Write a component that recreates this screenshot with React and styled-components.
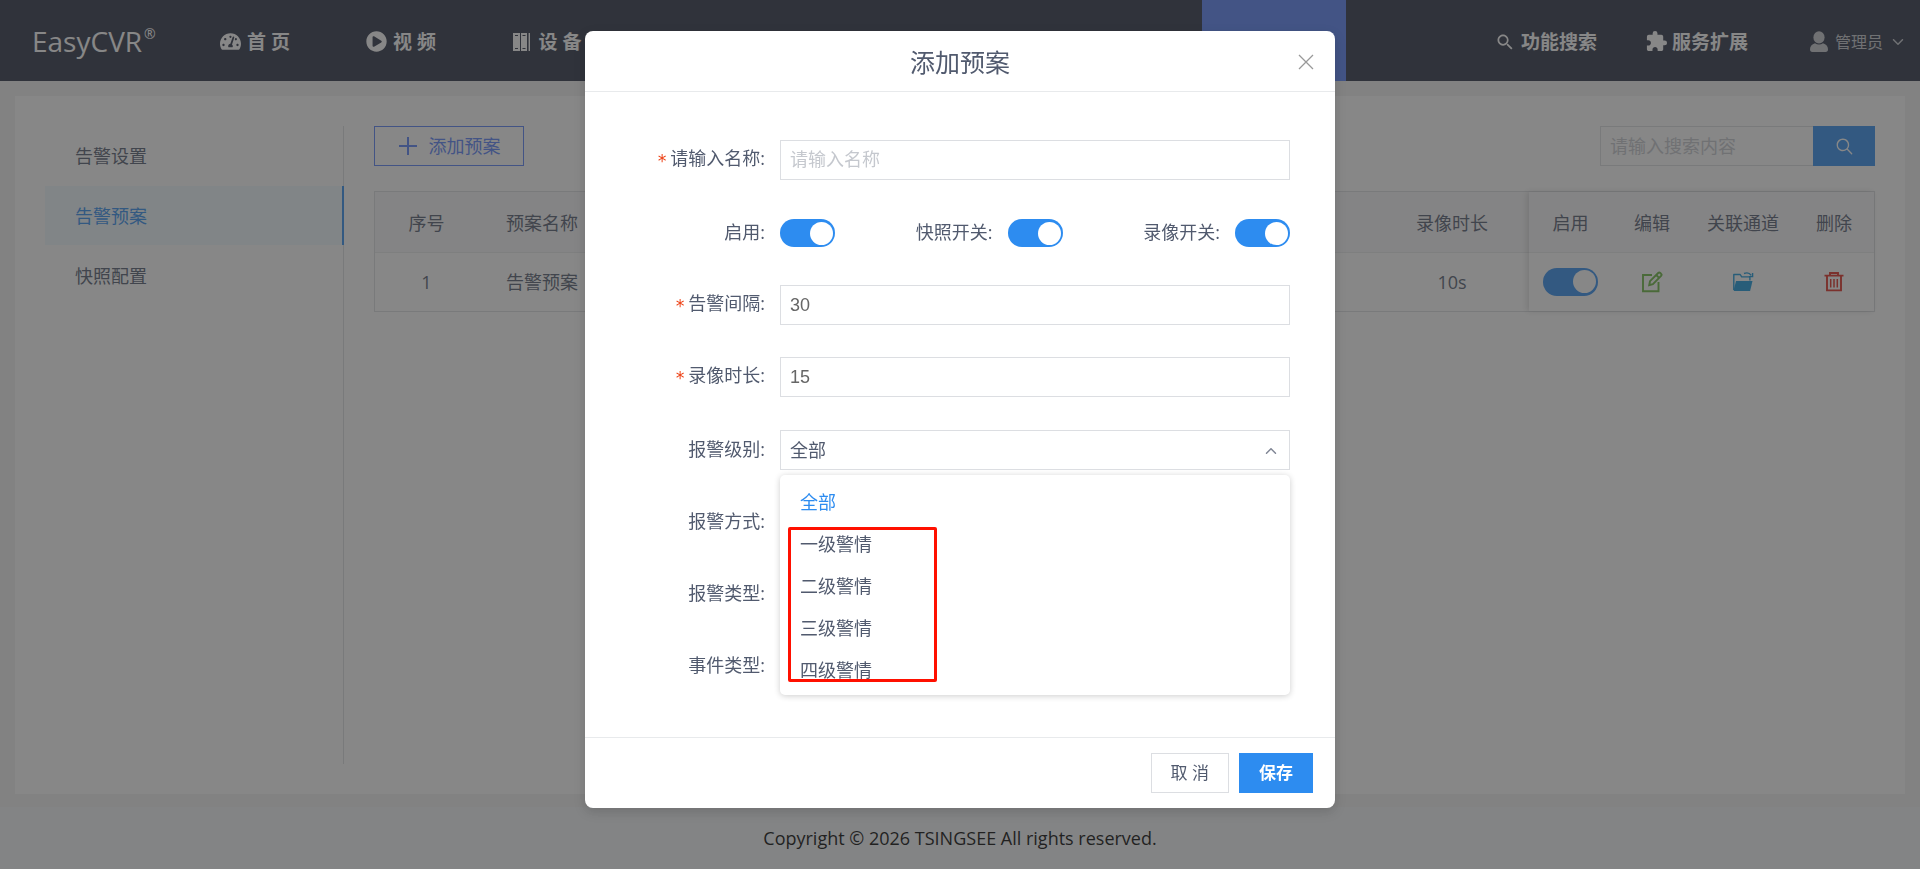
import React, { useState } from "react";
import styled, { createGlobalStyle } from "styled-components";
import { FaTachometerAlt, FaPlayCircle } from "react-icons/fa";
import { MdExtension } from "react-icons/md";
import {
   IoIosArrowDown,
   IoIosArrowUp,
   IoIosSearch,
   IoMdSearch,
} from "react-icons/io";

const GlobalStyle = createGlobalStyle`
   * {
      box-sizing: border-box;
   }
   body {
      margin: 0;
      font-family: "Open Sans", "Noto Sans CJK SC", sans-serif;
      font-size: 18px;
      line-height: 24px;
      color: #515a6e;
      background: #f2f2f2;
   }
   button, input, select {
      margin: 0;
      font: inherit;
      color: inherit;
      border-radius: 0;
      outline: none;
   }
   svg {
      display: block;
      flex: none;
   }
`;
const Page = styled.div`
   display: flex;
   flex-direction: column;
   min-height: 100vh;
`;
const Header = styled.header`
   display: flex;
   height: 81px;
   color: #fff;
   background: #272e42;
`;
const Logo = styled.a`
   display: flex;
   align-items: center;
   width: 182px;
   padding-left: 32px;
   color: inherit;
   font-size: 28px;
   text-decoration: none;
   sup {
      align-self: flex-start;
      padding: 22px 0 0 2px;
      font-size: 14px;
   }
`;
const Nav = styled.nav`
   display: flex;
   flex: 1;
`;
const NavLink = styled.a`
   display: flex;
   align-items: center;
   justify-content: center;
   gap: ${(props) => props.$gap || 6}px;
   width: 146px;
   padding-top: 2px;
   color: inherit;
   font-size: 19px;
   font-weight: bold;
   text-decoration: none;
`;
const ActiveLink = styled(NavLink)`
   width: 144px;
   margin-left: auto;
   background: #5580fa;
`;
const Tools = styled.div`
   display: flex;
   align-items: center;
   justify-content: flex-end;
   gap: 48px;
   width: 574px;
   padding-right: 14px;
`;
const ToolLink = styled(NavLink)`
   width: auto;
`;
const UserButton = styled.button`
   display: flex;
   align-items: center;
   gap: 7px;
   margin-left: 14px;
   padding: 2px 0 0;
   border: none;
   color: #c5c8ce;
   font-size: 16px;
   background: none;
`;
const Card = styled.main`
   display: flex;
   flex: 1;
   gap: 30px;
   margin: 15px 15px 13px;
   padding: 30px;
   background: #fff;
`;
const SideMenu = styled.nav`
   width: 299px;
   border-right: 1px solid #dcdee2;
`;
const SideLink = styled.a`
   display: flex;
   align-items: center;
   height: 59px;
   margin-right: ${(props) => (props.$active ? "-1px" : "0")};
   margin-bottom: 1px;
   padding-left: 30px;
   border-right: 2px solid ${(props) => (props.$active ? "#2d8cf0" : "transparent")};
   color: ${(props) => (props.$active ? "#2d8cf0" : "inherit")};
   background: ${(props) => (props.$active ? "#f0faff" : "none")};
   text-decoration: none;
`;
const Content = styled.section`
   flex: 1;
   min-width: 0;
`;
const Toolbar = styled.div`
   display: flex;
   justify-content: space-between;
   margin-bottom: 25px;
`;
const AddButton = styled.button`
   display: flex;
   align-items: center;
   justify-content: center;
   gap: 11px;
   width: 150px;
   height: 40px;
   border: 1px solid #5580fa;
   color: #5580fa;
   background: #fff;
`;
const SearchBox = styled.form`
   display: flex;
   width: 275px;
   height: 40px;
   input {
      flex: 1;
      min-width: 0;
      padding: 0 9px;
      border: 1px solid #dcdee2;
      border-right: none;
   }
   input::placeholder {
      color: #c5c8ce;
   }
   button {
      display: flex;
      align-items: center;
      justify-content: center;
      width: 62px;
      padding: 0;
      border: none;
      color: #fff;
      background: #2d8cf0;
   }
`;
const TableWrap = styled.div`
   display: flex;
   border: 1px solid #dcdee2;
`;
const Table = styled.table`
   flex: 1;
   table-layout: fixed;
   border-collapse: collapse;
   th, td {
      height: 60px;
      padding: 0;
      font-weight: normal;
      text-align: center;
   }
   th {
      padding-top: 2px;
      border-bottom: 1px solid #e8eaec;
      background: #f8f8f9;
   }
   td {
      height: 59px;
   }
   td > * {
      margin: 0 auto;
   }
`;
const FixedTable = styled(Table)`
   flex: none;
   width: 345px;
   box-shadow: -2px 0 6px rgba(0, 0, 0, 0.15);
`;
const IconButton = styled.button`
   display: block;
   padding: 0;
   border: none;
   background: none;
`;
const Switch = styled.input.attrs({ type: "checkbox", role: "switch" })`
   display: flex;
   align-items: center;
   appearance: none;
   flex: none;
   width: 55px;
   height: 28px;
   padding: 0 2px;
   border-radius: 14px;
   background: #ccc;
   &::before {
      content: "";
      width: 23px;
      height: 23px;
      border-radius: 50%;
      background: #fff;
   }
   &:checked {
      justify-content: flex-end;
      background: #2d8cf0;
   }
`;
const Footer = styled.footer`
   height: 62px;
   color: #000;
   line-height: 62px;
   text-align: center;
   background: #f5f7f9;
`;
const Mask = styled.div`
   position: fixed;
   inset: 0;
   display: flex;
   align-items: flex-start;
   justify-content: center;
   padding-top: 31px;
   background: rgba(55, 55, 55, 0.6);
`;
const Modal = styled.div`
   width: 750px;
   max-width: 100%;
   border-radius: 8px;
   background: #fff;
   box-shadow: 0 4px 12px rgba(0, 0, 0, 0.15);
`;
const ModalHeader = styled.div`
   display: grid;
   grid-template-columns: 1fr auto 1fr;
   align-items: center;
   height: 61px;
   padding: 2px 21px 0;
   border-bottom: 1px solid #e8eaec;
   h2 {
      grid-column: 2;
      margin: 0;
      font-size: 25px;
      font-weight: normal;
   }
   button {
      justify-self: end;
      padding: 0;
      border: none;
      background: none;
   }
`;
const ModalBody = styled.form`
   padding: 48px 45px 19px 20px;
`;
const ModalFooter = styled.div`
   display: flex;
   justify-content: flex-end;
   gap: 10px;
   padding: 15px 22px;
   border-top: 1px solid #e8eaec;
`;
const Button = styled.button`
   height: 40px;
   padding: 0 19px;
   border: 1px solid ${(props) => (props.$primary ? "#2d8cf0" : "#dcdee2")};
   color: ${(props) => (props.$primary ? "#fff" : "#515a6e")};
   font-size: 17px;
   font-weight: ${(props) => (props.$primary ? "bold" : "normal")};
   background: ${(props) => (props.$primary ? "#2d8cf0" : "#fff")};
`;
const FormItem = styled.div`
   display: flex;
   align-items: center;
   gap: 15px;
   height: 40px;
   margin-bottom: ${(props) => (props.$compact ? 32 : 33)}px;
`;
const Label = styled.label`
   width: 160px;
   padding-bottom: 2px;
   text-align: right;
   &::before {
      content: ${(props) => (props.$required ? '"*"' : "none")};
      margin-right: 3px;
      color: #ed4014;
      font-family: "DejaVu Sans Mono", monospace;
      font-size: 17px;
      vertical-align: -2px;
   }
`;
const TextInput = styled.input`
   flex: 1;
   min-width: 0;
   height: 40px;
   padding: 0 9px;
   border: 1px solid #dcdee2;
   color: #666;
   font-family: "Liberation Sans", "Noto Sans CJK SC", sans-serif;
   &::placeholder {
      color: #c5c8ce;
   }
`;
const SwitchRow = styled.div`
   display: flex;
   flex: 1;
   align-items: center;
   justify-content: space-between;
`;
const SwitchField = styled.label`
   display: flex;
   align-items: center;
   gap: 15px;
   span {
      padding-bottom: 2px;
   }
`;
const SelectBox = styled.div`
   position: relative;
   flex: 1;
   select {
      display: block;
      appearance: none;
      width: 100%;
      height: 40px;
      padding: 0 9px;
      border: 1px solid #dcdee2;
      background: #fff;
   }
   > svg {
      position: absolute;
      top: 13px;
      right: 11px;
      color: #808695;
   }
`;
const Dropdown = styled.ul`
   position: absolute;
   z-index: 2;
   top: 45px;
   left: 0;
   right: 0;
   margin: 0;
   padding: 6px 0 4px;
   border-radius: 5px;
   list-style: none;
   background: #fff;
   box-shadow: 0 1px 6px rgba(0, 0, 0, 0.2);
`;
const DropdownItem = styled.li`
   padding: 9px 20px;
   color: ${(props) => (props.$selected ? "#2d8cf0" : "inherit")};
`;
const Highlight = styled.div`
   position: absolute;
   z-index: 3;
   top: 97px;
   left: 8px;
   width: 149px;
   height: 155px;
   border: 3px solid #ff1000;
   border-radius: 2px;
   pointer-events: none;
`;

const DeviceIcon = () => (
   <svg width="18" height="18" viewBox="0 0 18 18" fill="currentColor">
      <path
         fillRule="evenodd"
         d="M0 0h7v18H0zM2 2v1h3V2zM2 15v1h3v-1zM8 0h6v18H8zM9.5 2v1h3V2zM9.5 15v1h3v-1zM15.6 0H17v18h-1.4z"
      />
   </svg>
);
const UserIcon = () => (
   <svg width="18" height="22" viewBox="0 0 18 22" fill="currentColor">
      <ellipse cx="9" cy="6.4" rx="5.6" ry="6.2" />
      <path d="M5 12.2c2.4 1.6 5.6 1.6 8 0 3.2.9 5 3 5 6 0 1.800-.8 2.800-2.400 2.800H2.400C.8 21 0 20 0 18.200c0-3 1.800-5.100 5-6z" />
   </svg>
);
const PlusIcon = () => (
   <svg width="20" height="20" viewBox="0 0 20 20" stroke="currentColor" strokeWidth="2">
      <path d="M10 1v18M1 10h18" />
   </svg>
);
const EditIcon = () => (
   <svg width="22" height="22" viewBox="0 0 22 22" fill="none" stroke="#67b73c" strokeWidth="1.9">
      <path d="M11 4H2v16.2h15.500V11" />
      <path d="M8.200 14.200l.8-4 8.200-8.200a1.500 1.500 0 0 1 2.100 0l.8.8a1.500 1.500 0 0 1 0 2.100l-8.200 8.300zM15.200 4l2.900 2.900" />
   </svg>
);
const FolderIcon = () => (
   <svg width="22" height="22" viewBox="0 0 22 22" fill="none">
      <path
         d="M1.800 19V3.500h6.400l1.500 2.400h8.200v3.600"
         stroke="#1296db"
         strokeWidth="1.400"
         strokeLinejoin="round"
      />
      <path d="M4 10h16.500l-2.400 10H2.200L1.600 19.300z" fill="#1296db" />
      <path d="M12 2.500c3-1.200 5.600-.6 7.200 1.800M20.600 2v3.600h-3.600" stroke="#1296db" strokeWidth="1.400" />
   </svg>
);
const TrashIcon = () => (
   <svg width="22" height="22" viewBox="0 0 22 22" fill="none" stroke="#e02a1e" strokeWidth="1.900">
      <path d="M1.500 4.600h19M7 4.600V2h8v2.600M4 4.600v14.800h14V4.600" />
      <path d="M7.700 8v8.600M11 8v8.600M14.300 8v8.600" strokeWidth="1.500" />
   </svg>
);
const CloseIcon = () => (
   <svg width="16" height="16" viewBox="0 0 16 16" stroke="#999" strokeWidth="1.3">
      <path d="M1 1l14 14M15 1L1 15" />
   </svg>
);

const levels = ["全部", "一级警情", "二级警情", "三级警情", "四级警情"];
const sideLinks = ["告警设置", "告警预案", "快照配置"];

const App = () => {
   const [level, setLevel] = useState("全部");
   return (
      <>
         <GlobalStyle />
         <Page>
            <Header>
               <Logo href="#">
                  EasyCVR<sup>®</sup>
               </Logo>
               <Nav>
                  <NavLink href="#">
                     <FaTachometerAlt size={21} />首 页
                  </NavLink>
                  <NavLink href="#">
                     <FaPlayCircle size={21} />视 频
                  </NavLink>
                  <NavLink href="#" $gap={8}>
                     <DeviceIcon />设 备
                  </NavLink>
                  <ActiveLink href="#" aria-current="page" />
               </Nav>
               <Tools>
                  <ToolLink href="#">
                     <IoMdSearch size={20} />功能搜索
                  </ToolLink>
                  <ToolLink href="#" $gap={4}>
                     <MdExtension size={23} />服务扩展
                  </ToolLink>
                  <UserButton type="button">
                     <UserIcon />
                     管理员
                     <IoIosArrowDown size={16} />
                  </UserButton>
               </Tools>
            </Header>
            <Card>
               <SideMenu>
                  {sideLinks.map((name) => (
                     <SideLink key={name} href="#" $active={name === "告警预案"}>
                        {name}
                     </SideLink>
                  ))}
               </SideMenu>
               <Content>
                  <Toolbar>
                     <AddButton type="button">
                        <PlusIcon />
                        添加预案
                     </AddButton>
                     <SearchBox>
                        <input placeholder="请输入搜索内容" aria-label="请输入搜索内容" />
                        <button type="button">
                           <IoIosSearch size={21} />
                        </button>
                     </SearchBox>
                  </Toolbar>
                  <TableWrap>
                     <Table>
                        <colgroup>
                           <col width="103" />
                           <col width="128" />
                           <col />
                           <col width="154" />
                        </colgroup>
                        <thead>
                           <tr>
                              <th>序号</th>
                              <th>预案名称</th>
                              <th />
                              <th>录像时长</th>
                           </tr>
                        </thead>
                        <tbody>
                           <tr>
                              <td>1</td>
                              <td>告警预案</td>
                              <td />
                              <td>10s</td>
                           </tr>
                        </tbody>
                     </Table>
                     <FixedTable>
                        <colgroup>
                           <col width="83" />
                           <col width="80" />
                           <col width="102" />
                           <col width="80" />
                        </colgroup>
                        <thead>
                           <tr>
                              <th>启用</th>
                              <th>编辑</th>
                              <th>关联通道</th>
                              <th>删除</th>
                           </tr>
                        </thead>
                        <tbody>
                           <tr>
                              <td>
                                 <Switch defaultChecked aria-label="启用" />
                              </td>
                              <td>
                                 <IconButton type="button" aria-label="编辑">
                                    <EditIcon />
                                 </IconButton>
                              </td>
                              <td>
                                 <IconButton type="button" aria-label="关联通道">
                                    <FolderIcon />
                                 </IconButton>
                              </td>
                              <td>
                                 <IconButton type="button" aria-label="删除">
                                    <TrashIcon />
                                 </IconButton>
                              </td>
                           </tr>
                        </tbody>
                     </FixedTable>
                  </TableWrap>
               </Content>
            </Card>
            <Footer>Copyright © 2026 TSINGSEE All rights reserved.</Footer>
         </Page>
         <Mask>
            <Modal role="dialog" aria-labelledby="modal-title">
               <ModalHeader>
                  <h2 id="modal-title">添加预案</h2>
                  <button type="button" aria-label="关闭">
                     <CloseIcon />
                  </button>
               </ModalHeader>
               <ModalBody id="plan-form">
                  <FormItem>
                     <Label htmlFor="name" $required>
                        请输入名称:
                     </Label>
                     <TextInput id="name" placeholder="请输入名称" />
                  </FormItem>
                  <FormItem $compact>
                     <Label htmlFor="enable">启用:</Label>
                     <SwitchRow>
                        <Switch id="enable" defaultChecked />
                        <SwitchField>
                           <span>快照开关:</span>
                           <Switch defaultChecked />
                        </SwitchField>
                        <SwitchField>
                           <span>录像开关:</span>
                           <Switch defaultChecked />
                        </SwitchField>
                     </SwitchRow>
                  </FormItem>
                  <FormItem $compact>
                     <Label htmlFor="interval" $required>
                        告警间隔:
                     </Label>
                     <TextInput id="interval" defaultValue="30" />
                  </FormItem>
                  <FormItem>
                     <Label htmlFor="duration" $required>
                        录像时长:
                     </Label>
                     <TextInput id="duration" defaultValue="15" />
                  </FormItem>
                  <FormItem $compact>
                     <Label htmlFor="level">报警级别:</Label>
                     <SelectBox>
                        <select
                           id="level"
                           value={level}
                           onChange={(e) => setLevel(e.target.value)}
                        >
                           {levels.map((item) => (
                              <option key={item}>{item}</option>
                           ))}
                        </select>
                        <IoIosArrowUp size={16} />
                        <Dropdown role="listbox" aria-label="报警级别">
                           {levels.map((item) => (
                              <DropdownItem
                                 key={item}
                                 role="option"
                                 aria-selected={item === level}
                                 $selected={item === level}
                                 onClick={() => setLevel(item)}
                              >
                                 {item}
                              </DropdownItem>
                           ))}
                        </Dropdown>
                        <Highlight />
                     </SelectBox>
                  </FormItem>
                  <FormItem $compact>
                     <Label htmlFor="method">报警方式:</Label>
                     <SelectBox>
                        <select id="method" />
                     </SelectBox>
                  </FormItem>
                  <FormItem $compact>
                     <Label htmlFor="type">报警类型:</Label>
                     <SelectBox>
                        <select id="type" />
                     </SelectBox>
                  </FormItem>
                  <FormItem $compact>
                     <Label htmlFor="event">事件类型:</Label>
                     <SelectBox>
                        <select id="event" />
                     </SelectBox>
                  </FormItem>
               </ModalBody>
               <ModalFooter>
                  <Button type="button">取 消</Button>
                  <Button type="button" $primary>
                     保存
                  </Button>
               </ModalFooter>
            </Modal>
         </Mask>
      </>
   );
};
export default App;
